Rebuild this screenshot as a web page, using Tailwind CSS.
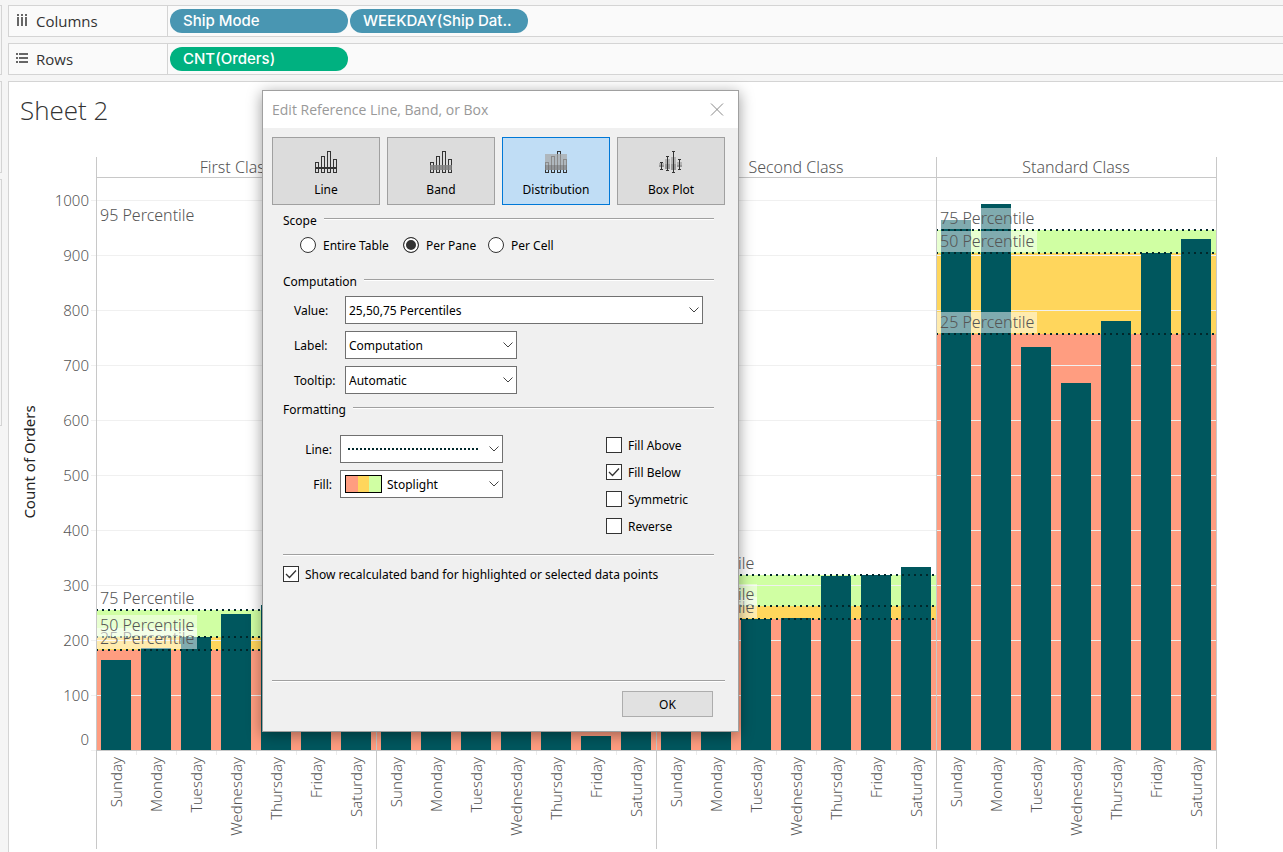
<!DOCTYPE html>
<html lang="en">
<head>
    <meta charset="UTF-8">
    <meta name="viewport" content="width=device-width, initial-scale=1.0">
    <title>Sheet 2</title>
    <script src="https://cdn.jsdelivr.net/npm/@tailwindcss/browser@4"></script>
</head>
<body class="bg-[#f5f5f5] font-['Open_Sans',sans-serif] text-[#333]">
    <div class="flex min-h-screen overflow-hidden">
        <!-- Edge of the side panel -->
        <div class="w-[2px] shrink-0 flex flex-col gap-[6px] pt-[5px] mr-[6px]">
            <div class="h-[70px] border border-l-0 border-[#d4d4d4]"></div>
            <div class="h-[92px] border border-l-0 border-[#d4d4d4]"></div>
            <div class="h-[247px] border border-l-0 border-[#d4d4d4]"></div>
        </div>

        <div class="flex-1 min-w-0 flex flex-col gap-[6px] pt-[5px]">
            <!-- Columns shelf -->
            <div class="flex h-8 border border-r-0 border-[#d4d4d4] bg-[#fafafa]">
                <div class="flex items-center w-[159px] shrink-0 border-r border-[#d4d4d4] pl-[7px] text-[15px]">
                    <svg class="mr-2" width="12" height="14" fill="#666" shape-rendering="crispEdges">
                        <path d="M1 0h2v2H1zM5 0h2v2H5zM9 0h2v2H9zM1 3h2v9H1zM5 3h2v9H5zM9 3h2v9H9z"/>
                    </svg>
                    Columns
                </div>
                <div class="flex items-center gap-[2px] pl-[2px] font-['Inter',sans-serif] text-[15px] font-medium text-white">
                    <button class="w-[178px] h-6 rounded-full bg-[#4996b2] pl-[13px] text-left leading-6">Ship Mode</button>
                    <button class="w-[178px] h-6 rounded-full bg-[#4996b2] pl-[13px] text-left leading-6">WEEKDAY(Ship Dat..</button>
                </div>
            </div>

            <!-- Rows shelf -->
            <div class="flex h-8 border border-r-0 border-[#d4d4d4] bg-[#fafafa]">
                <div class="flex items-center w-[159px] shrink-0 border-r border-[#d4d4d4] pl-[7px] text-[15px]">
                    <svg class="mr-2" width="12" height="12" fill="#666" shape-rendering="crispEdges">
                        <path d="M0 0h2v2H0zM3 0h9v2H3zM0 4h2v2H0zM3 4h9v2H3zM0 8h2v2H0zM3 8h9v2H3z"/>
                    </svg>
                    Rows
                </div>
                <div class="flex items-center pl-[2px] font-['Inter',sans-serif] text-[15px] font-medium text-white">
                    <button class="w-[178px] h-6 rounded-full bg-[#00b180] pl-[13px] text-left leading-6">CNT(Orders)</button>
                </div>
            </div>

            <!-- Sheet -->
            <main class="flex-1 border-t border-l border-[#d4d4d4] bg-white">
                <h1 class="h-[68px] pl-[11px] pt-2 text-[26px] leading-10 font-light">Sheet 2</h1>
                <svg id="chart" class="block" width="1208" height="702" role="img" aria-label="Count of Orders"></svg>
            </main>
        </div>
    </div>

    <!-- Reference line dialog -->
    <div role="dialog" aria-labelledby="dialog-title" class="absolute left-[262px] top-[90px] w-[477px] border border-[#a0a0a0] bg-[#f0f0f0] font-['Noto_Sans',sans-serif] text-[12px] leading-5 text-black shadow-[0_3px_14px_rgba(0,0,0,0.4)]">
        <div class="flex items-center justify-between h-[37px] bg-white pl-[9px] pr-[14px]">
            <h2 id="dialog-title" class="font-['Open_Sans',sans-serif] text-[14px] text-[#999]">Edit Reference Line, Band, or Box</h2>
            <button aria-label="Close">
                <svg width="14" height="14" fill="none" stroke="#888"><path d="M1 .5l12 12M13 .5L1 12.500"/></svg>
            </button>
        </div>

        <div class="pl-[9px] pr-[13px] pt-[9px] pb-[14px]">
            <div class="flex gap-[7px]">
                <button class="flex flex-col items-center w-[108px] h-[68px] border border-[#a0a0a0] bg-[#dcdcdc] pt-[13px]">
                    <svg width="22" height="22" fill="none" stroke="#333" shape-rendering="crispEdges">
                        <path d="M.5 11.500h3v10h-3zM6.500 5.500h3v16h-3zM12.500.5h3v21h-3zM18.500 8.500h3v13h-3z"/>
                        <path d="M0 17h22" stroke-width="2"/>
                    </svg>
                    <span class="mt-[7px]">Line</span>
                </button>
                <button class="flex flex-col items-center w-[108px] h-[68px] border border-[#a0a0a0] bg-[#dcdcdc] pt-[13px]">
                    <svg width="22" height="22" fill="none" stroke="#333" shape-rendering="crispEdges">
                        <path d="M.5 11.500h3v10h-3zM6.500 5.500h3v16h-3zM12.500.5h3v21h-3zM18.500 8.500h3v13h-3z"/>
                        <path d="M0 14h22v5H0z" stroke="none" fill="#808080" fill-opacity=".85"/>
                    </svg>
                    <span class="mt-[7px]">Band</span>
                </button>
                <button class="flex flex-col items-center w-[108px] h-[68px] border border-[#0078d7] bg-[#c0ddf5] pt-[13px]">
                    <svg width="22" height="22" fill="none" stroke="#333" shape-rendering="crispEdges">
                        <path d="M.5 11.500h3v10h-3zM6.500 5.500h3v16h-3zM12.500.5h3v21h-3zM18.500 8.500h3v13h-3z"/>
                        <path d="M0 3h22v11H0z" stroke="none" fill="#aaa" fill-opacity=".75"/>
                        <path d="M0 14h22v5H0z" stroke="none" fill="#888" fill-opacity=".85"/>
                    </svg>
                    <span class="mt-[7px]">Distribution</span>
                </button>
                <button class="flex flex-col items-center w-[108px] h-[68px] border border-[#a0a0a0] bg-[#dcdcdc] pt-[13px]">
                    <svg width="24" height="22" fill="none" stroke="#333" shape-rendering="crispEdges">
                        <path d="M0 12h5v2H0zM6 8h5v5H6zM12 6h5v7h-5zM18 11h5v3h-5z" stroke="none" fill="#b4b4b4"/>
                        <path d="M0 14h5v2H0zM6 13h5v5H6zM12 13h5v6h-5zM18 14h5v2h-5z" stroke="none" fill="#999"/>
                        <path d="M2.500 11v8M8.500 5v15M14.500 0v22M20.500 8v11M1 11.500h3M1 18.500h3M7 5.500h3M7 19.500h3M13 .5h3M13 21.500h3M19 8.500h3M19 18.500h3"/>
                    </svg>
                    <span class="mt-[7px]">Box Plot</span>
                </button>
            </div>

            <div class="pl-[11px] pr-[11px]">
                <!-- Scope -->
                <div class="flex mt-[6px]">
                    <h3>Scope</h3>
                    <div class="flex-1 mt-[7px] ml-[7px] h-[2px] border-t border-b border-t-[#a0a0a0] border-b-white"></div>
                </div>
                <div class="flex items-center mt-[6px] h-4 pl-[17px]">
                    <input type="radio" name="scope" id="scope-table" class="appearance-none size-4 rounded-full border border-[#333] bg-white">
                    <label for="scope-table" class="w-[87px] pl-[7px] pt-[2px]">Entire Table</label>
                    <input type="radio" name="scope" id="scope-pane" checked class="appearance-none size-4 rounded-full border border-[#333] bg-white checked:bg-[#333] checked:shadow-[inset_0_0_0_2px_#fff]">
                    <label for="scope-pane" class="w-[69px] pl-[7px] pt-[2px]">Per Pane</label>
                    <input type="radio" name="scope" id="scope-cell" class="appearance-none size-4 rounded-full border border-[#333] bg-white">
                    <label for="scope-cell" class="pl-[7px] pt-[2px]">Per Cell</label>
                </div>

                <!-- Computation -->
                <div class="flex mt-[19px]">
                    <h3>Computation</h3>
                    <div class="flex-1 mt-[7px] ml-[7px] h-[2px] border-t border-b border-t-[#a0a0a0] border-b-white"></div>
                </div>
                <div class="flex flex-col gap-[7px] mt-1 pl-[11px] pr-[11px]">
                    <div class="flex items-center">
                        <label for="value" class="w-[51px] pt-[2px]">Value:</label>
                        <div class="relative flex-1">
                            <select id="value" class="appearance-none block w-full h-7 border border-[#707070] bg-white pl-[3px] pt-[2px]">
                                <option>25,50,75 Percentiles</option>
                            </select>
                            <svg class="absolute right-1 top-[11px] pointer-events-none" width="10" height="6" fill="none" stroke="#444"><path d="M.5.5L5 5 9.500.5"/></svg>
                        </div>
                    </div>
                    <div class="flex items-center">
                        <label for="label" class="w-[51px] pt-[2px]">Label:</label>
                        <div class="relative w-[172px]">
                            <select id="label" class="appearance-none block w-full h-7 border border-[#707070] bg-white pl-[3px] pt-[2px]">
                                <option>Computation</option>
                            </select>
                            <svg class="absolute right-1 top-[11px] pointer-events-none" width="10" height="6" fill="none" stroke="#444"><path d="M.5.5L5 5 9.500.5"/></svg>
                        </div>
                    </div>
                    <div class="flex items-center">
                        <label for="tooltip" class="w-[51px] pt-[2px]">Tooltip:</label>
                        <div class="relative w-[172px]">
                            <select id="tooltip" class="appearance-none block w-full h-7 border border-[#707070] bg-white pl-[3px] pt-[2px]">
                                <option>Automatic</option>
                            </select>
                            <svg class="absolute right-1 top-[11px] pointer-events-none" width="10" height="6" fill="none" stroke="#444"><path d="M.5.5L5 5 9.500.5"/></svg>
                        </div>
                    </div>
                </div>

                <!-- Formatting -->
                <div class="flex mt-[6px]">
                    <h3>Formatting</h3>
                    <div class="flex-1 mt-[7px] ml-[7px] h-[2px] border-t border-b border-t-[#a0a0a0] border-b-white"></div>
                </div>
                <div class="flex justify-between items-start mt-[15px]">
                    <div class="flex flex-col gap-[7px]">
                        <div class="flex items-center">
                            <label for="line" class="w-[57px] pr-2 pt-[2px] text-right">Line:</label>
                            <div class="relative w-[163px]">
                                <select id="line" class="appearance-none block w-full h-7 border border-[#707070] bg-white">
                                    <option aria-label="Dotted"></option>
                                </select>
                                <svg class="absolute left-2 top-[13px] pointer-events-none" width="130" height="2"><path d="M0 1h130" stroke="#00272b" stroke-width="2" stroke-dasharray="2 2"/></svg>
                                <svg class="absolute right-1 top-[11px] pointer-events-none" width="10" height="6" fill="none" stroke="#444"><path d="M.5.5L5 5 9.500.5"/></svg>
                            </div>
                        </div>
                        <div class="flex items-center">
                            <label for="fill" class="w-[57px] pr-2 pt-[2px] text-right">Fill:</label>
                            <div class="relative w-[163px]">
                                <select id="fill" class="appearance-none block w-full h-7 border border-[#707070] bg-white pl-[46px] pt-[2px]">
                                    <option>Stoplight</option>
                                </select>
                                <div class="absolute left-[5px] top-[5px] flex w-[37px] h-[18px] border border-black pointer-events-none">
                                    <span class="flex-1 bg-[#ff9d80]"></span>
                                    <span class="flex-1 bg-[#ffd65c]"></span>
                                    <span class="flex-1 bg-[#d0ffa3]"></span>
                                </div>
                                <svg class="absolute right-1 top-[11px] pointer-events-none" width="10" height="6" fill="none" stroke="#444"><path d="M.5.5L5 5 9.500.5"/></svg>
                            </div>
                        </div>
                    </div>
                    <div class="flex flex-col gap-[11px] w-[108px] pt-[2px]">
                        <label class="flex items-center gap-[6px] h-4">
                            <input type="checkbox" class="appearance-none size-4 border border-[#333] bg-white">
                            <span class="pt-[2px]">Fill Above</span>
                        </label>
                        <label class="relative flex items-center gap-[6px] h-4">
                            <input type="checkbox" checked class="appearance-none size-4 border border-[#333] bg-white">
                            <span class="pt-[2px]">Fill Below</span>
                            <svg class="absolute left-0 top-0 pointer-events-none" width="16" height="16" fill="none" stroke="#333" stroke-width="1.3"><path d="M3 8l3.500 3.500L13 4.500"/></svg>
                        </label>
                        <label class="flex items-center gap-[6px] h-4">
                            <input type="checkbox" class="appearance-none size-4 border border-[#333] bg-white">
                            <span class="pt-[2px]">Symmetric</span>
                        </label>
                        <label class="flex items-center gap-[6px] h-4">
                            <input type="checkbox" class="appearance-none size-4 border border-[#333] bg-white">
                            <span class="pt-[2px]">Reverse</span>
                        </label>
                    </div>
                </div>

                <div class="mt-5 h-[2px] border-t border-b border-t-[#a0a0a0] border-b-white"></div>
                <label class="relative flex items-center gap-[6px] h-4 mt-[10px]">
                    <input type="checkbox" checked class="appearance-none size-4 border border-[#333] bg-white">
                    <span class="pt-[2px]">Show recalculated band for highlighted or selected data points</span>
                    <svg class="absolute left-0 top-0 pointer-events-none" width="16" height="16" fill="none" stroke="#333" stroke-width="1.3"><path d="M3 8l3.500 3.500L13 4.500"/></svg>
                </label>
            </div>

            <div class="mt-[98px] h-[2px] border-t border-b border-t-[#a0a0a0] border-b-white"></div>
            <div class="flex justify-end mt-[9px] pr-3">
                <button class="w-[91px] h-[26px] pt-[2px] border border-[#adadad] bg-[#e1e1e1]">OK</button>
            </div>
        </div>
    </div>

    <script>
        const LEFT = 87, BASE = 600, PANE = 280, STEP = 40, UNIT = 0.55;
        const days = ['Sunday', 'Monday', 'Tuesday', 'Wednesday', 'Thursday', 'Friday', 'Saturday'];

        // lines: 25, 50 and 75 percentile of each pane
        const panes = [
            { name: 'First Class', values: [164, 185, 205, 247, 264, 230, 190], lines: [182, 205, 255] },
            { name: 'Same Day', values: [60, 88, 135, 128, 90, 25, 85], lines: [60, 95, 130] },
            { name: 'Second Class', values: [260, 235, 238, 240, 316, 318, 333], lines: [238, 262, 318] },
            { name: 'Standard Class', values: [964, 993, 733, 667, 780, 904, 929], lines: [757, 904, 946] }
        ];

        const y = v => Math.round(BASE - v * UNIT);
        const rect = (x, top, w, h, fill) => `<rect x="${x}" y="${top}" width="${w}" height="${h}" fill="${fill}"/>`;
        let bands = '', grid = '', bars = '', marks = '', labels = '', frame = '';

        for (let v = 0; v <= 1000; v += 100) {
            grid += rect(LEFT - 5, y(v), PANE * 4 + 5, 1, '#f0f0f0');
            labels += `<text x="80" y="${v ? y(v) + 6 : y(v) - 5}" text-anchor="end">${v}</text>`;
        }

        panes.forEach((pane, i) => {
            const x0 = LEFT + i * PANE;
            const [low, mid, high] = pane.lines.map(y);
            bands += rect(x0, high, PANE, mid - high, '#d0ffa3');
            bands += rect(x0, mid, PANE, low - mid, '#ffd65c');
            bands += rect(x0, low, PANE, BASE - low, '#ff9d80');

            pane.values.forEach((v, d) => {
                bars += rect(x0 + 5 + d * STEP, y(v), 30, BASE - y(v), '#00575e');
                if (d) frame += rect(x0 + d * STEP, BASE + 1, 1, 4, '#ececec');
                labels += `<text transform="translate(${x0 + 26 + d * STEP} 607) rotate(-90)" text-anchor="end">${days[d]}</text>`;
            });

            [low, mid, high].forEach(top => {
                marks += `<path d="M${x0} ${top}h${PANE}" stroke="#00272b" stroke-width="2" stroke-dasharray="2 4"/>`;
            });
            [[25, low], [50, mid], [75, high]].forEach(([n, top]) => {
                marks += `<rect x="${x0}" y="${top - 22}" width="101" height="21" fill="#fff" fill-opacity=".5"/>`;
                marks += `<text x="${x0 + 4}" y="${top - 6}" font-size="16">${n} Percentile</text>`;
            });

            frame += rect(x0, 7, 1, 692, '#c8c8c8');
            labels += `<text x="${x0 + 140}" y="23" font-size="16" text-anchor="middle">${pane.name}</text>`;
        });

        frame += rect(LEFT + PANE * 4, 7, 1, 692, '#c8c8c8');
        frame += rect(LEFT, 27, PANE * 4, 1, '#c8c8c8');
        frame += rect(LEFT, BASE, PANE * 4, 1, '#c8c8c8');
        labels += `<text x="${LEFT + 4}" y="71" font-size="16">95 Percentile</text>`;
        labels += '<text class="font-normal" transform="translate(26 312) rotate(-90)" text-anchor="middle" fill="#222">Count of Orders</text>';

        document.getElementById('chart').innerHTML =
            `<g class="font-['Noto_Sans',sans-serif] font-light" shape-rendering="crispEdges" font-size="15" fill="#555">${bands}${grid}${bars}${marks}${frame}${labels}</g>`;
    </script>
</body>
</html>
